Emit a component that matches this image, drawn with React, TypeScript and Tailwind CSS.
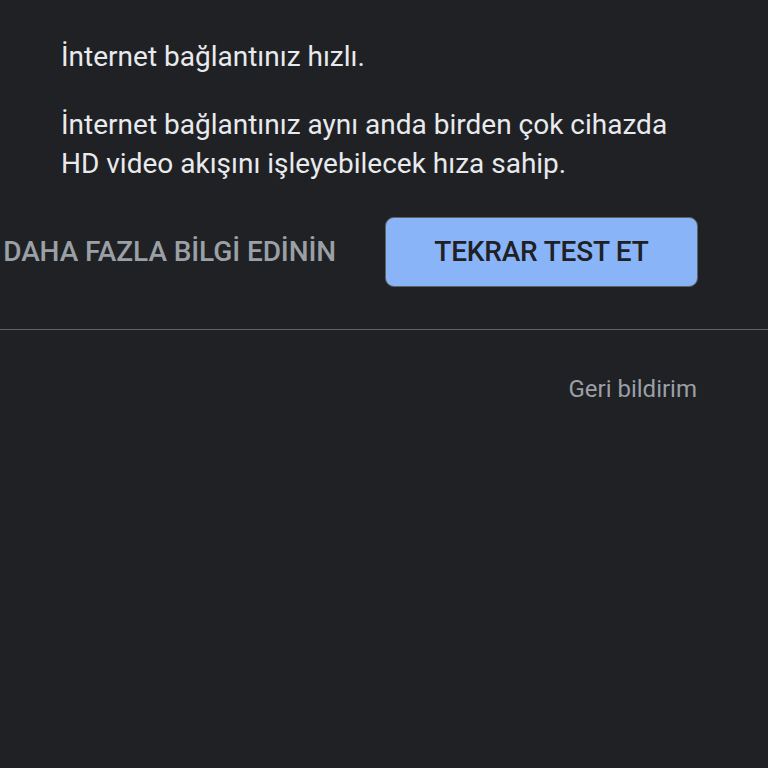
export default function App() {
  return (
    <div
      className="w-[768px] h-[768px] bg-[#202124] overflow-hidden"
      style={{ fontFamily: "Roboto, 'Noto Sans', sans-serif" }}
    >
      <div className="pl-[61px] pt-[37px] text-[#e8eaed] text-[28px] leading-[39px]">
        <p className="whitespace-nowrap">İnternet bağlantınız hızlı.</p>
        <p className="mt-[29px] whitespace-nowrap">
          <span className="block">İnternet bağlantınız aynı anda birden çok cihazda</span>
          <span className="block">HD video akışını işleyebilecek hıza sahip.</span>
        </p>
      </div>
      <div className="flex justify-end items-center gap-[49px] pr-[70px] mt-[34px]">
        <span className="text-[#9aa0a6] text-[28px] font-medium whitespace-nowrap tracking-[-0.1px]">
          DAHA FAZLA BİLGİ EDİNİN
        </span>
        <button className="w-[313px] h-[70px] shrink-0 rounded-[9px] bg-[#8ab4f8] border border-[#5f6368] text-[#202124] text-[28px] font-medium tracking-[-0.2px]">
          TEKRAR TEST ET
        </button>
      </div>
      <div className="mt-[42px] h-px bg-[#5f6368]" />
      <div className="flex justify-end pr-[71px] mt-[45px]">
        <span className="text-[#9aa0a6] text-[24px] leading-[28px]">Geri bildirim</span>
      </div>
    </div>
  );
}
